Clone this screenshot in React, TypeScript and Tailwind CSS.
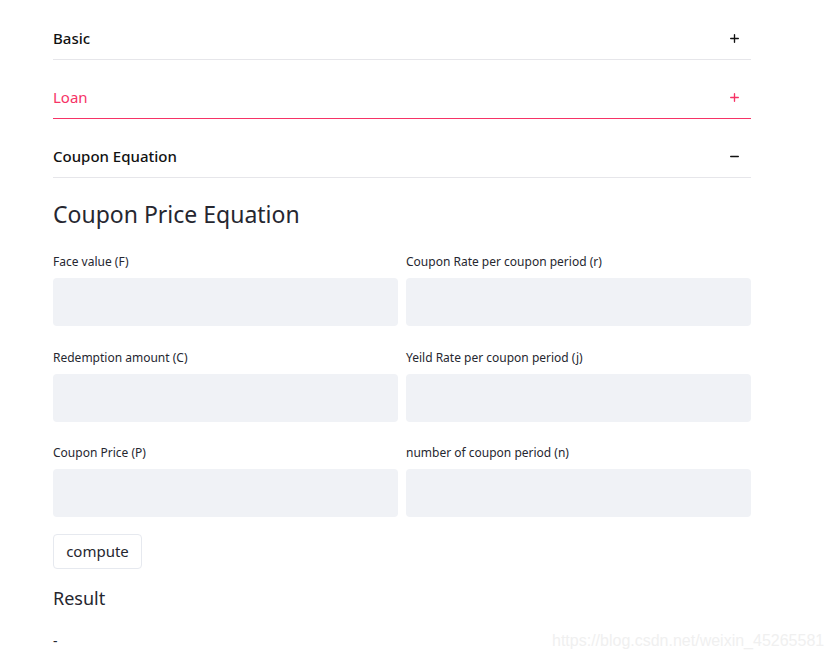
import { Plus, Minus } from "lucide-react";

const font = { fontFamily: "'Noto Sans', 'Open Sans', sans-serif" };

const sections = [
  { title: "Basic", open: false, active: false },
  { title: "Loan", open: false, active: true },
  { title: "Coupon Equation", open: true, active: false },
];

const fields = [
  "Face value (F)",
  "Coupon Rate per coupon period (r)",
  "Redemption amount (C)",
  "Yeild Rate per coupon period (j)",
  "Coupon Price (P)",
  "number of coupon period (n)",
];

export default function App() {
  return (
    <div className="relative min-h-[660px] w-[830px] bg-white text-[#262730]" style={font}>
      <div className="ml-[53px] w-[698px] pt-px">
        {/* Expanders */}
        {sections.map((s) => (
          <div
            key={s.title}
            className={`flex h-[59px] items-start justify-between border-b pt-[27px] ${
              s.active ? "border-[#f63366] text-[#f63366]" : "border-[#e6e6ea] text-[#111]"
            }`}
          >
            <span className={`text-[15px] leading-5 ${s.active ? "font-normal" : "font-medium"}`}>
              {s.title}
            </span>
            <span className="mr-[10px] mt-[4px]">
              {s.open ? <Minus size={13} strokeWidth={2.5} /> : <Plus size={13} strokeWidth={2.5} />}
            </span>
          </div>
        ))}

        {/* Body */}
        <h2 className="mt-[21px] text-[23px] font-normal leading-[30px]">Coupon Price Equation</h2>

        <div className="mt-[24px] grid grid-cols-2 gap-x-2 gap-y-[22.5px]">
          {fields.map((f) => (
            <div key={f}>
              <div className="h-[17px] text-[12px] leading-[17px]">{f}</div>
              <div className="mt-[8px] h-12 rounded bg-[#f0f2f6]" />
            </div>
          ))}
        </div>

        <button className="mt-[17px] h-[35px] w-[89px] rounded border border-[#e6e9ef] bg-white text-[15px] text-[#262730]">
          compute
        </button>

        <div className="mt-[17px] text-[18px] leading-6">Result</div>
        <div className="mt-[21px] text-[14px] leading-5">-</div>
      </div>

      {/* watermark */}
      <div
        className="absolute left-[552px] top-[631px] text-[16px] leading-5 text-[#f0f0f0]"
        style={{ fontFamily: "'Liberation Sans', Arial, sans-serif" }}
      >
        https://blog.csdn.net/weixin_45265581
      </div>
    </div>
  );
}
